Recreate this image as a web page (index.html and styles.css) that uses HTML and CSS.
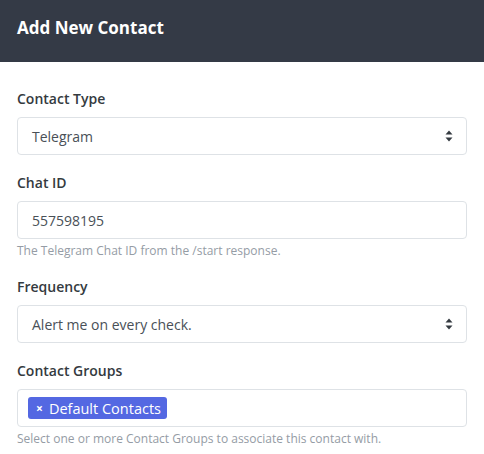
FILE: index.html
```html
<!DOCTYPE html>
<html>
<head>
<meta charset="utf-8">
<link rel="stylesheet" href="styles.css">
</head>
<body>
<div class="modal">
  <div class="modal-header">
    <h1 class="modal-title">Add New Contact</h1>
  </div>
  <form class="modal-body">
    <div class="form-group">
      <label class="form-label">Contact Type</label>
      <div class="form-control select">
        <span>Telegram</span>
        <svg class="caret" width="8" height="12" viewBox="0 0 8 12"><path d="M4 0.5 L7.5 4.5 H0.5 Z M4 11.5 L7.5 7.5 H0.5 Z" fill="#343a40"/></svg>
      </div>
    </div>
    <div class="form-group">
      <label class="form-label">Chat ID</label>
      <div class="form-control">557598195</div>
      <div class="help">The Telegram Chat ID from the /start response.</div>
    </div>
    <div class="form-group">
      <label class="form-label">Frequency</label>
      <div class="form-control select">
        <span>Alert me on every check.</span>
        <svg class="caret" width="8" height="12" viewBox="0 0 8 12"><path d="M4 0.5 L7.5 4.5 H0.5 Z M4 11.5 L7.5 7.5 H0.5 Z" fill="#343a40"/></svg>
      </div>
    </div>
    <div class="form-group">
      <label class="form-label">Contact Groups</label>
      <div class="form-control tags">
        <span class="tag"><span class="tag-x">×</span>Default Contacts</span>
      </div>
      <div class="help">Select one or more Contact Groups to associate this contact with.</div>
    </div>
  </form>
</div>
</body>
</html>
```

FILE: styles.css
```css
html, body {
  margin: 0;
  padding: 0;
  background: #fff;
  font-family: "Open Sans", sans-serif;
}
.modal {
  width: 484px;
}
.modal-header {
  background: #343a46;
  height: 62px;
  padding: 0 17px;
  display: flex;
  align-items: center;
  box-sizing: border-box;
}
.modal-title {
  margin: 0 0 6px 0;
  color: #fff;
  font-size: 17px;
  font-weight: 700;
  line-height: 24px;
}
.modal-body {
  padding: 26px 17px 0 17px;
  margin: 0;
}
.form-group {
  margin-bottom: 17px;
}
.form-label {
  display: block;
  font-size: 14px;
  font-weight: 600;
  line-height: 21px;
  color: #343a40;
  margin-bottom: 8px;
}
.form-control {
  box-sizing: border-box;
  height: 38px;
  border: 1px solid #dee2e6;
  border-radius: 4px;
  padding: 0 14px;
  display: flex;
  align-items: center;
  font-size: 14px;
  color: #495057;
}
.select {
  justify-content: space-between;
  padding-right: 13px;
}
.caret {
  display: block;
}
.help {
  font-size: 12px;
  line-height: 16px;
  color: #959ca5;
  margin-top: 4px;
}
.tags {
  padding: 0 10px;
}
.tag {
  display: inline-flex;
  align-items: center;
  height: 22px;
  background: #5468e2;
  color: #fff;
  border-radius: 3px;
  padding: 0 6px 0 8px;
  font-size: 14.5px;
}
.tag-x {
  font-weight: 700;
  font-size: 12px;
  margin-right: 6px;
}
```
